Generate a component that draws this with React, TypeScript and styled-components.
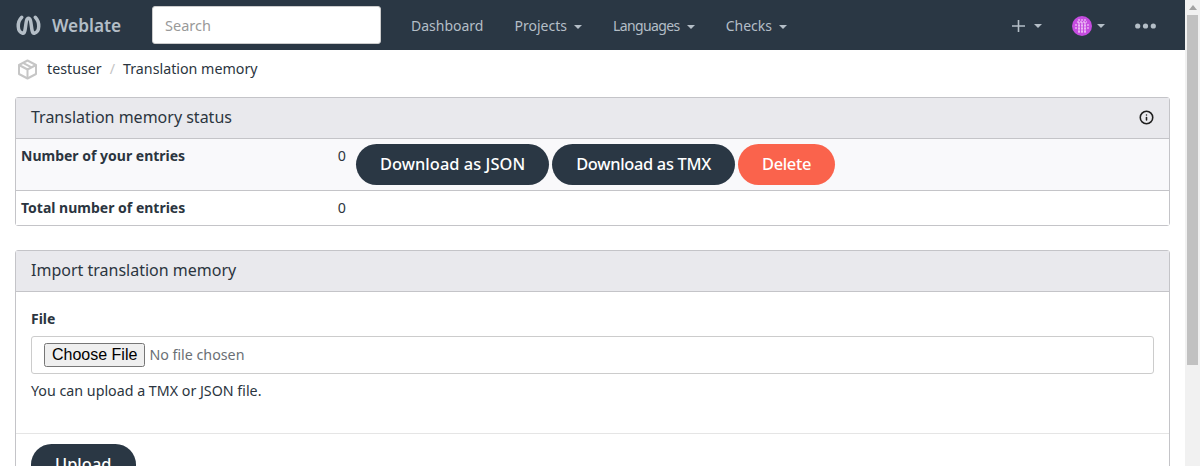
import React from 'react'
import styled, { createGlobalStyle } from 'styled-components'
import { Info } from 'lucide-react'

const Global = createGlobalStyle`
  html, body { margin: 0; padding: 0; height: 466px; overflow: hidden; background: #fff; }
  body { font-family: "Noto Sans", sans-serif; font-size: 14.25px; color: #2b3540; }
  * { box-sizing: border-box; }
`

const Page = styled.div`
  display: flex;
  height: 466px;
  overflow: hidden;
`
const Main = styled.div`
  flex: 1;
  min-width: 0;
  height: 466px;
  overflow: hidden;
`
const Scrollbar = styled.div`
  width: 15px;
  background: #f1f1f1;
  padding: 0 2px;
`
const ScrollArrow = styled.div`
  height: 15px;
  display: flex;
  align-items: center;
  justify-content: center;
  &::before {
    content: '';
    border-bottom: 5px solid #a3a3a3;
    border-left: 4px solid transparent;
    border-right: 4px solid transparent;
  }
`
const ScrollThumb = styled.div`
  height: 350px;
  background: #c1c1c1;
`
const Navbar = styled.nav`
  height: 50px;
  background: #2a3744;
  display: flex;
  align-items: center;
  padding-left: 15px;
  color: #b4bec7;
  font-size: 14px;
`
const Brand = styled.div`
  display: flex;
  align-items: center;
  gap: 10px;
  width: 137px;
  color: #b4bec7;
  font-size: 17.3px;
  font-weight: 600;
`
const Search = styled.input`
  width: 229px;
  height: 38px;
  border: 1px solid #ccc;
  border-radius: 3px;
  padding: 0 12px;
  font: inherit;
  font-size: 14.5px;
  &::placeholder { color: #999; }
`
const NavLinks = styled.div`
  display: flex;
  gap: 31px;
  margin-left: 30px;
  flex: 1;
`
const NavLink = styled.span<{ $tight?: boolean }>`
  letter-spacing: ${p => (p.$tight ? '-0.6px' : 'normal')};
`
const Caret = styled.span<{ $gap?: number }>`
  display: inline-block;
  margin-left: ${p => p.$gap ?? 7}px;
  vertical-align: middle;
  border-top: 4px solid currentColor;
  border-left: 4px solid transparent;
  border-right: 4px solid transparent;
`
const NavRight = styled.div`
  display: flex;
  align-items: center;
  gap: 30px;
  padding: 2px 29px 0 0;
`
const NavIcon = styled.div`
  display: flex;
  align-items: center;
`
const Crumbs = styled.div`
  height: 47px;
  padding: 9px 0 0 17px;
  display: flex;
  align-items: flex-start;
  gap: 8px;
  line-height: 20px;
`
const CrumbIcon = styled.span`
  display: flex;
  margin-right: 1px;
`
const Sep = styled.span`
  color: #c4c4c4;
`
const Panel = styled.section`
  margin: 0 15px 24px;
  border: 1px solid #c4c4c8;
  border-radius: 3px;
`
const PanelHead = styled.div`
  height: 41px;
  background: #e9e9ed;
  border-bottom: 1px solid #c4c4c8;
  display: flex;
  align-items: center;
  justify-content: space-between;
  padding: 0 15px 2px;
  font-size: 16px;
`
const Row = styled.div<{ $shaded?: boolean; $h: number }>`
  display: grid;
  grid-template-columns: 303px 22px 1fr;
  align-items: center;
  height: ${p => p.$h}px;
  padding-left: 5px;
  background: ${p => (p.$shaded ? '#f9f9fb' : '#fff')};
  & + & { border-top: 1px solid #c4c4c8; }
`
const Label = styled.div`
  font-weight: 700;
  font-size: 14px;
  align-self: start;
  padding-top: 7px;
`
const Value = styled.div`
  text-align: right;
  align-self: start;
  padding-top: 7px;
`
const Actions = styled.div`
  display: flex;
  gap: 3px;
  align-self: start;
  padding: 5px 0 0 10px;
`
const Pill = styled.button<{ $danger?: boolean; $tight?: boolean }>`
  height: 41px;
  padding: 0 24px 2px;
  border: 0;
  border-radius: 21px;
  background: ${p => (p.$danger ? '#fa634c' : '#2a3744')};
  color: #fff;
  font: inherit;
  font-size: 16.4px;
  font-weight: 500;
  letter-spacing: ${p => (p.$tight ? '-0.3px' : '0.05px')};
  white-space: nowrap;
`
const Body = styled.div`
  padding: 17px 15px 0;
`
const FieldLabel = styled.div`
  font-weight: 700;
  font-size: 14px;
  line-height: 20px;
  margin-bottom: 7px;
`
const FileBox = styled.div`
  height: 38px;
  border: 1px solid #ccc;
  border-radius: 3px;
  display: flex;
  align-items: center;
  padding-left: 12px;
  & input {
    font-family: "Noto Sans", sans-serif;
    font-size: 14.25px;
    color: #6a6f75;
  }
  & input::file-selector-button {
    font-family: "Liberation Sans", sans-serif;
    font-size: 16px;
    color: #000;
  }
`
const Help = styled.div`
  margin-top: 7px;
  line-height: 20px;
`
const Footer = styled.div`
  border-top: 1px solid #e5e5e5;
  margin-top: 32px;
  padding: 10px 15px;
`

const Logo = () => (
  <svg width="27" height="22" viewBox="0 0 28 22" fill="none" stroke="#b4bec7" strokeWidth="3.6" strokeLinecap="round">
    <path d="M7 3C2 8 2 18 8 19.5 12 20.5 10 4 14 4c4 0 2 16.5 6 15.5C26 18 26 8 21 3" />
  </svg>
)

const Cube = () => (
  <svg width="21" height="21" viewBox="0 0 21 21" fill="none" stroke="#c6c6c6" strokeWidth="2" strokeLinejoin="round">
    <path d="M10.5 1.5l8.5 4.5v9l-8.5 4.5L2 15V6z" />
    <path d="M2 6l8.5 4.5L19 6M10.5 10.5v9M6 3.8l8.5 4.5" />
  </svg>
)

const Avatar = () => (
  <svg width="20" height="20" viewBox="0 0 20 20">
    <circle cx="10" cy="10" r="10" fill="#c54ce0" />
    <path d="M5 6h10M3 9h14M3 12h14M6 15h8M7 3v14M10 3v14M13 3v14" stroke="#f7dcfb" strokeWidth="1" strokeDasharray="2 1" />
  </svg>
)

const PlusIcon = () => (
  <svg width="13" height="14" viewBox="0 0 13 14" stroke="#b4bec7" strokeWidth="1.6">
    <path d="M6.5 1v12M0 7h13" />
  </svg>
)

const Dots = () => (
  <svg width="21" height="6" viewBox="0 0 21 6" fill="#b4bec7">
    <circle cx="2.7" cy="3" r="2.6" />
    <circle cx="10.5" cy="3" r="2.6" />
    <circle cx="18.3" cy="3" r="2.6" />
  </svg>
)

export default function App() {
  return (
    <Page>
      <Global />
      <Main>
        <Navbar>
          <Brand><Logo />Weblate</Brand>
          <Search placeholder="Search" />
          <NavLinks>
            <NavLink>Dashboard</NavLink>
            <NavLink>Projects<Caret /></NavLink>
            <NavLink $tight>Languages<Caret /></NavLink>
            <NavLink>Checks<Caret /></NavLink>
          </NavLinks>
          <NavRight>
            <NavIcon><PlusIcon /><Caret $gap={9} /></NavIcon>
            <NavIcon><Avatar /><Caret $gap={5} /></NavIcon>
            <NavIcon><Dots /></NavIcon>
          </NavRight>
        </Navbar>
        <Crumbs>
          <CrumbIcon><Cube /></CrumbIcon>
          <span>testuser</span><Sep>/</Sep><span>Translation memory</span>
        </Crumbs>
        <Panel>
          <PanelHead>Translation memory status<Info size={15} strokeWidth={2.5} color="#1f1f1f" /></PanelHead>
          <Row $shaded $h={51}>
            <Label>Number of your entries</Label>
            <Value>0</Value>
            <Actions>
              <Pill>Download as JSON</Pill>
              <Pill $tight>Download as TMX</Pill>
              <Pill $danger $tight>Delete</Pill>
            </Actions>
          </Row>
          <Row $h={35}>
            <Label>Total number of entries</Label>
            <Value>0</Value>
          </Row>
        </Panel>
        <Panel>
          <PanelHead>Import translation memory</PanelHead>
          <Body>
            <FieldLabel>File</FieldLabel>
            <FileBox><input type="file" /></FileBox>
            <Help>You can upload a TMX or JSON file.</Help>
          </Body>
          <Footer><Pill>Upload</Pill></Footer>
        </Panel>
      </Main>
      <Scrollbar><ScrollArrow /><ScrollThumb /></Scrollbar>
    </Page>
  )
}
